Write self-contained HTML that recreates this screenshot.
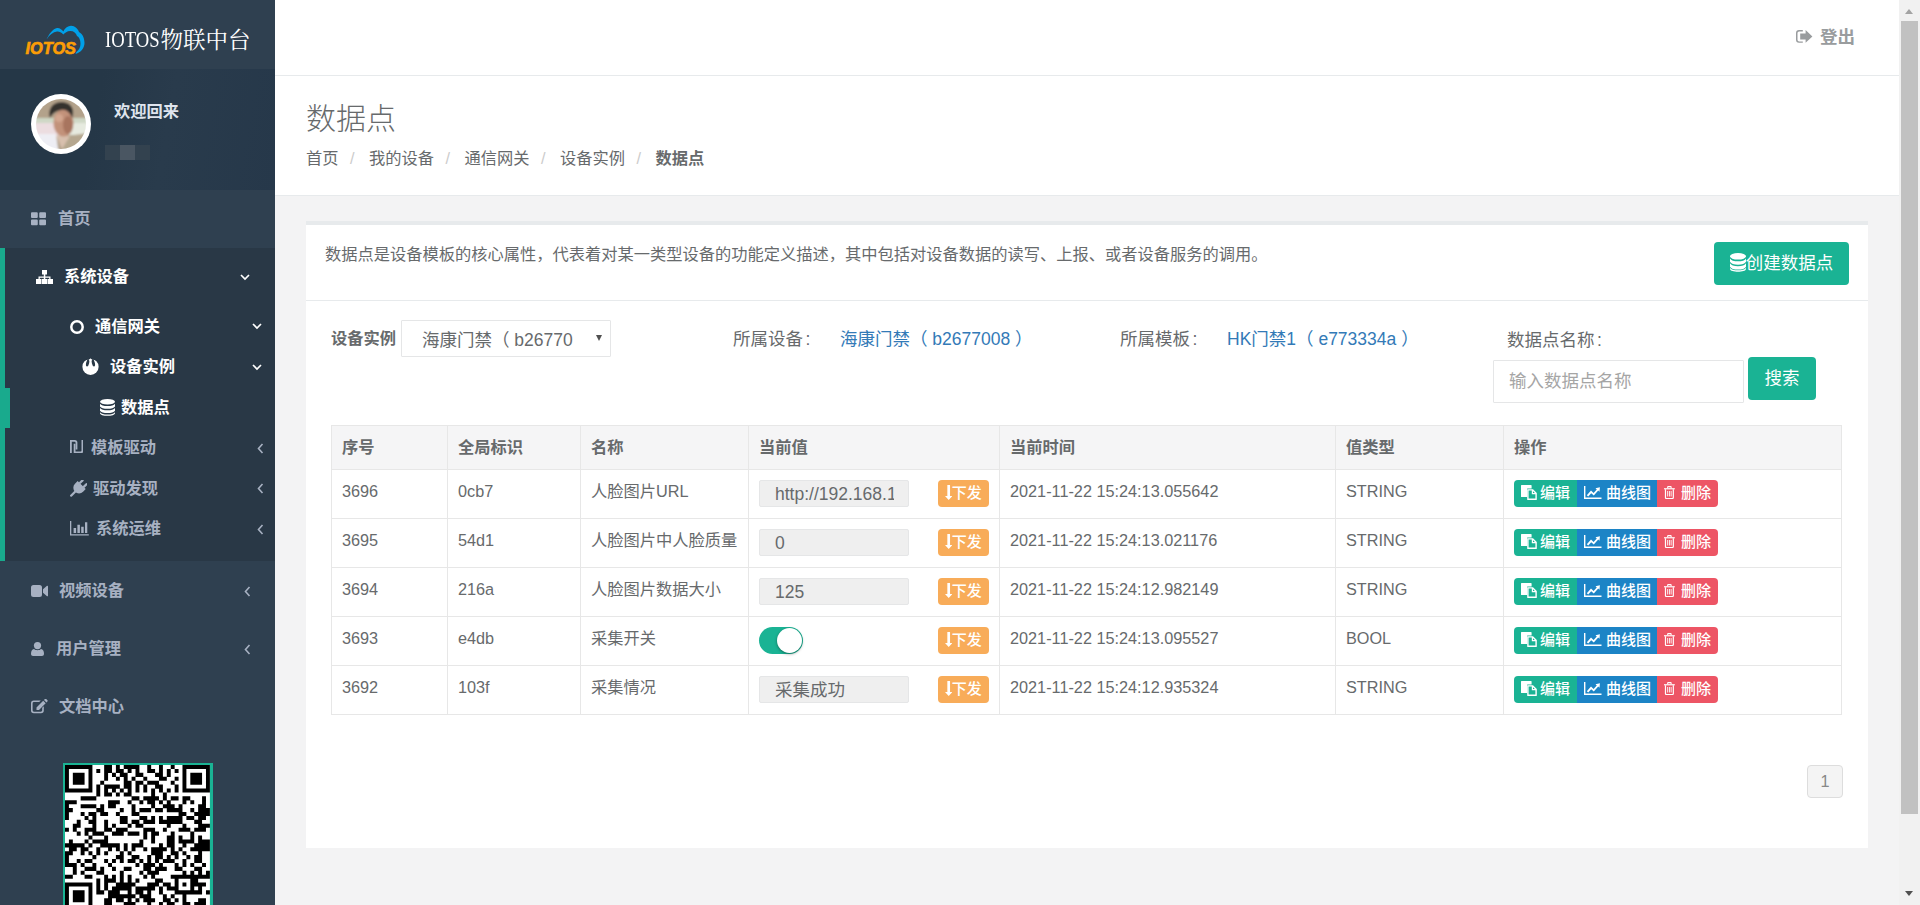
<!DOCTYPE html>
<html lang="zh-CN">
<head>
<meta charset="utf-8">
<title>IOTOS物联中台 - 数据点</title>
<style>
*{box-sizing:border-box}
html,body{margin:0;padding:0}
body{width:1920px;height:905px;overflow:hidden;position:relative;background:#f3f3f4;color:#676a6c;
 font-family:"Liberation Sans","Noto Sans CJK SC",sans-serif;font-size:16.25px;line-height:1.42857}
a{text-decoration:none;color:inherit}
ul{list-style:none;margin:0;padding:0}
svg{display:block}

/* ---------- sidebar ---------- */
#side{position:absolute;left:0;top:0;width:275px;height:905px;background:#2f4050;overflow:hidden}
.brand{position:absolute;left:0;top:0;width:275px;height:70px}
.brand .logo{position:absolute;left:24px;top:24px;width:62px;height:34px}
.brand .name .lat{display:inline-block;width:55.500px;transform:scaleX(.83);transform-origin:0 50%;letter-spacing:0;vertical-align:baseline;position:relative;top:-1px}
.brand .name{position:absolute;left:105px;top:24px;font-family:"Liberation Serif","Noto Serif CJK SC",serif;font-size:22.5px;line-height:34px;color:#fff;white-space:nowrap;letter-spacing:0}
.profile{position:absolute;left:0;top:69px;width:275px;height:121px;background:#263848 linear-gradient(100deg,#253747 0,#253747 35%,#293b4c 60%,#26384a 100%);overflow:hidden}
.avatar{position:absolute;left:31px;top:25px}
.profile .hello{position:absolute;left:114px;top:30px;font-size:16.25px;font-weight:700;color:#dfe4ed;line-height:24px}
.profile .uname{position:absolute;left:105px;top:76px;width:45px;height:15px;background:#33424f}
.profile .uname i{position:absolute;left:15px;top:0;width:15px;height:15px;background:#4a5662}

.nav a{display:block;position:relative;color:#a7b1c2;font-weight:700;white-space:nowrap}
.nav .ic{position:absolute}
.nav .arr{position:absolute}

.qrbox{position:absolute;left:63px;top:763px;width:150px;height:150px;background:#1ab394}
.qrbox svg{position:absolute;left:1.950px;top:1.950px}
/* ---------- nav ---------- */
.nav li{position:relative}
.nav .l1>a{height:58px;line-height:56px;padding-left:58px}
.nav .l1.active{background:#293846;border-left:5px solid #19aa8d;padding-bottom:11px;margin-bottom:1.5px}
.nav .l1.active>a{color:#fff;padding-left:59px;height:58.5px}
.nav .sub a{height:40.5px;line-height:38.5px}
.nav .sub a.on{color:#fff}
.nav .cur:before{content:"";position:absolute;left:-5px;top:0;width:10px;height:40.5px;background:#19aa8d}
.nav svg{position:absolute;top:50%;fill:currentColor}

/* ---------- main ---------- */
#main{position:absolute;left:275px;top:0;width:1624px;height:905px}
.topbar{position:absolute;left:0;top:0;width:1624px;height:76px;background:#fff;border-bottom:1px solid #e7eaec}
.logout{position:absolute;left:1521px;top:24px;height:26px;line-height:26px;font-size:17.5px;font-weight:700;color:#999c9e;padding-left:24px;white-space:nowrap}
.logout svg{position:absolute;left:0;top:6.200px;fill:#999c9e}
.heading{position:absolute;left:0;top:76px;width:1624px;height:120px;background:#fff;border-bottom:1px solid #e7eaec}
.heading h2{position:absolute;left:31px;top:22px;margin:0;font-size:30px;font-weight:300;line-height:42px;color:#676a6c;white-space:nowrap}
.crumb{position:absolute;left:31px;top:70px;height:24px;line-height:24px;white-space:nowrap;display:flex}
.crumb li+li:before{content:"/";color:#ccc;padding:0 14.5px 0 11.5px;font-weight:400}
.crumb li.act{font-weight:700}

.ibox{position:absolute;left:31px;top:221px;width:1562px;height:627px;background:#fff;border-top:4px solid #e7eaec}
.ibox-title{position:absolute;left:0;top:0;width:1562px;height:76px;border-bottom:1px solid #e7eaec}
.ibox-title p{position:absolute;left:19px;top:17px;margin:0;line-height:24px;font-size:16.25px;color:#676a6c;white-space:nowrap}
.btn{display:inline-block;color:#fff;border-radius:4px;white-space:nowrap;text-align:center}
.btn-create{position:absolute;left:1408px;top:17px;width:135px;height:43px;line-height:43px;background:#1ab394;font-size:17.5px;padding-left:16px}
.btn-create svg{position:absolute;left:16px;top:11.300px;fill:#fff}

.filters{position:absolute;left:0;top:76px;width:1562px;height:125px;font-size:17.5px}
.filters>*{position:absolute;white-space:nowrap}
.flabel{left:25px;top:25px;font-size:16.25px;font-weight:700;line-height:24px}
.fselect{left:95px;top:19px;width:210px;height:37px;border:1px solid #e5e6e7;border-radius:1px;background:#fff;line-height:38px;padding-left:20px;color:#676a6c;overflow:hidden}
.fselect:after{content:"";position:absolute;right:8.500px;top:14px;border:3.600px solid transparent;border-top:6.500px solid #505050;border-bottom:0}
.ftext s{text-decoration:none;margin-left:2.500px}
.ftext{top:25px;line-height:26px}
.flink{top:25px;line-height:26px;color:#337ab7}
.finput{left:1187px;top:59px;width:251px;height:43px;border:1px solid #e5e6e7;border-radius:1px;line-height:41px;padding-left:15px;color:#a5a5a5}
.btn-search{left:1442px;top:56px;width:68px;height:43px;line-height:42px;background:#1ab394;font-size:17.5px}

table.dt{position:absolute;left:25px;top:200px;width:1510px;border-collapse:collapse;table-layout:fixed;font-size:16.25px}
table.dt th,table.dt td{border:1px solid #e7e7e7;padding:0 10px;text-align:left;vertical-align:top;white-space:nowrap;overflow:hidden}
table.dt th{height:44px;line-height:42px;background:#f5f5f6;font-weight:700;color:#676a6c}
table.dt td{height:49px;line-height:22px;padding-top:10px}
.vin b{display:block;font-weight:400;overflow:hidden;width:119px}
.vin{display:inline-block;vertical-align:top;width:150px;height:27px;line-height:27px;background:#efefef;border:1px solid #e5e6e7;border-radius:2px;padding-left:15px;font-size:17.5px;color:#676a6c;overflow:hidden;margin-top:0}
.bsend{font-weight:500;display:inline-block;vertical-align:top;width:51px;height:27px;line-height:26px;background:#f8ac59;color:#fff;border-radius:4px;font-size:15px;margin-left:29px;position:relative;padding-left:13.8px;text-align:left}
.bsend svg{position:absolute;left:6.9px;top:4.6px;fill:#fff}
.sw{display:inline-block;vertical-align:top;width:44px;height:27px;border-radius:14px;background:#1ab394;position:relative;margin-top:0;margin-right:106px}
.sw i{position:absolute;right:.600px;top:.600px;width:25.800px;height:25.800px;border-radius:50%;background:#fff;box-shadow:0 1px 3px rgba(0,0,0,.4)}
.ops{font-weight:500;display:flex;height:27px;margin-top:0;font-size:15px;color:#fff;line-height:25px}
.ops span{position:relative;height:27px}
.ops svg{position:absolute;top:6px;fill:#fff}
.o1{width:63px;background:#1ab394;border-radius:4px 0 0 4px;padding-left:26px}
.o2{width:80px;background:#1c84c6;padding-left:29px}
.o3{width:61px;background:#ed5565;border-radius:0 4px 4px 0;padding-left:24px}
.pager{position:absolute;left:1501px;top:540px;width:36px;height:33px;line-height:31px;text-align:center;background:#f4f4f4;border:1px solid #ddd;border-radius:4px;color:#888;font-size:16.25px}

/* ---------- fake scrollbar ---------- */
#sb{position:absolute;left:1899px;top:0;width:21px;height:905px;background:#f1f1f1}
#sb .thumb{position:absolute;left:2px;top:21px;width:17px;height:793px;background:#c1c1c1}
#sb .up{position:absolute;left:6.4px;top:9px;border:4.5px solid transparent;border-bottom:5px solid #a3a3a3;border-top:0}
#sb .dn{position:absolute;left:6px;top:891px;border:4.5px solid transparent;border-top:5px solid #505050;border-bottom:0}
</style>
</head>
<body>

<nav id="side">
  <div class="brand">
    <svg class="logo" width="62" height="34" viewBox="0 0 62 34"><path fill="#00a0e9" d="M22.500 15.500C25 10 29 4.500 33 4C36 3.800 38 6 39.300 7.500C41 4 44 1.800 47 1.800C51 1.800 54 5 55 8C59 10 60.500 15 60.500 19C60.500 24 57 28.500 51.500 30L52.300 28C55 26 56.500 23 56.500 19.700C56.500 16 55 13 53 12C52 9 50 7 46.200 7C43 7 41 9 39.300 10.500C37 8 35 7.400 33 7.600C29 8 25.500 11 22.500 15.500Z"/><text x="1.500" y="30.200" font-family="'Liberation Sans',sans-serif" font-size="17.300" font-weight="700" font-style="italic" fill="#fb9d06" stroke="#fb9d06" stroke-width=".7" textLength="50.500" lengthAdjust="spacingAndGlyphs">IOTOS</text></svg>
    <div class="name"><span class="lat">IOTOS</span>物联中台</div>
  </div>
  <div class="profile">
    <svg class="avatar" width="60" height="60" viewBox="0 0 60 60"><defs><clipPath id="avc"><circle cx="30" cy="30" r="25"/></clipPath><filter id="avb" x="-10%" y="-10%" width="120%" height="120%"><feGaussianBlur stdDeviation="1.200"/></filter></defs><circle cx="30" cy="30" r="30" fill="#fff"/><g clip-path="url(#avc)"><g filter="url(#avb)"><rect x="-5" y="-5" width="70" height="70" fill="#b3a28b"/><rect x="-5" y="24" width="70" height="6" fill="#cfd8c6"/><rect x="-5" y="29" width="34" height="14" fill="#ecdde0"/><rect x="38" y="29" width="30" height="12" fill="#e6eadf"/><path d="M-5 40h30l4 28h-34z" fill="#eeeef4"/><path d="M36 42l29-4v30H28z" fill="#b5a78f"/><path d="M25 41l6 14 8-13z" fill="#d8c0ae"/><ellipse cx="32.500" cy="29" rx="10" ry="13.500" fill="#c2927a"/><ellipse cx="37" cy="31" rx="5" ry="9" fill="#a8755f"/><ellipse cx="28" cy="24" rx="4" ry="4" fill="#d3a68f"/><path d="M19 24c-3-10 4-17 13-16s12 8 9 16c-2-6-6-9-11-8s-8 3-11 8z" fill="#35302e"/></g></g></svg>
    <div class="hello">欢迎回来</div>
    <div class="uname"><i></i></div>
  </div>
  <ul class="nav" id="menu" style="position:absolute;left:0;top:190px;width:275px">
    <li class="l1"><a style="padding-left:58px"><svg width="15" height="13.5" viewBox="0 0 15.5 13.5" style="left:31px;margin-top:-6.75px"><path d="M0 1a1 1 0 0 1 1-1h5a1 1 0 0 1 1 1v4a1 1 0 0 1-1 1H1a1 1 0 0 1-1-1zM8.500 1a1 1 0 0 1 1-1h5a1 1 0 0 1 1 1v4a1 1 0 0 1-1 1h-5a1 1 0 0 1-1-1zM0 8.500a1 1 0 0 1 1-1h5a1 1 0 0 1 1 1v4a1 1 0 0 1-1 1H1a1 1 0 0 1-1-1zM8.500 8.500a1 1 0 0 1 1-1h5a1 1 0 0 1 1 1v4a1 1 0 0 1-1 1h-5a1 1 0 0 1-1-1z"/></svg>首页</a></li>
    <li class="l1 active"><a><svg width="17" height="14" viewBox="0 0 17 14" style="left:31px;margin-top:-7.0px"><path d="M6 0h5v4.500H9.300V6.500H14.500V9H17v5h-5.500V9h1.700V7.800H9.300V9H11v5H6V9h1.800V7.800H3.800V9H5.500v5H0V9h2.500V6.500H7.800V4.500H6z"/></svg>系统设备<svg width="10" height="7" viewBox="0 0 10 7" style="left:235px;margin-top:-3.5px"><path d="M1 1l4 4 4-4" fill="none" stroke="currentColor" stroke-width="1.700"/></svg></a>
      <ul class="sub">
        <li><a class="on" style="padding-left:90px"><svg width="14" height="14" viewBox="0 0 14 14" style="left:65px;margin-top:-7.0px"><circle cx="7" cy="7" r="5.700" fill="none" stroke="currentColor" stroke-width="2.500"/></svg>通信网关<svg width="10" height="7" viewBox="0 0 10 7" style="left:247px;margin-top:-3.5px"><path d="M1 1l4 4 4-4" fill="none" stroke="currentColor" stroke-width="1.700"/></svg></a></li>
        <li><a class="on" style="padding-left:105px"><svg width="17" height="17" viewBox="0 0 17 17" style="left:77px;margin-top:-9px"><defs><mask id="ram"><rect width="17" height="17" fill="#000"/><circle cx="8.500" cy="8.800" r="8.100" fill="#fff"/><path d="M0 0h17v3.200L8.500 1 0 3.200z" fill="#000"/><ellipse cx="5.700" cy="4.800" rx="1.500" ry="3.700" transform="rotate(14 5.700 4.800)" fill="#000"/><ellipse cx="11.300" cy="4.800" rx="1.500" ry="3.700" transform="rotate(-14 11.300 4.800)" fill="#000"/><path d="M8.500 .2l1.700 2.300H9.200v5.500H7.800V2.500H6.800z" fill="#fff"/></mask></defs><rect width="17" height="17" mask="url(#ram)"/></svg>设备实例<svg width="10" height="7" viewBox="0 0 10 7" style="left:247px;margin-top:-3.5px"><path d="M1 1l4 4 4-4" fill="none" stroke="currentColor" stroke-width="1.700"/></svg></a></li>
        <li class="cur"><a class="on" style="padding-left:116px"><svg width="15" height="17" viewBox="0 0 15 17" style="left:95px;margin-top:-8.5px"><ellipse cx="7.500" cy="2.800" rx="7.500" ry="2.800"/><path d="M0 4.800c1 1.700 3.800 2.300 7.500 2.300s6.500-.6 7.500-2.300v2.700c-1 1.700-3.800 2.300-7.500 2.300S1 9.200 0 7.500z"/><path d="M0 9c1 1.700 3.800 2.300 7.500 2.300S14 10.700 15 9v2.700c-1 1.700-3.800 2.300-7.500 2.300S1 13.400 0 11.700z"/><path d="M0 13.200c1 1.700 3.800 2.300 7.500 2.300s6.500-.6 7.500-2.300v1c0 1.600-3.600 2.600-7.500 2.600S0 15.800 0 14.200z"/></svg>数据点</a></li>
        <li><a style="padding-left:86px"><svg width="13.300" height="13.300" viewBox="0 0 13.300 13.300" style="left:65px;margin-top:-8.200px"><path d="M0 13.300V0H4.800A2.600 2.600 0 0 1 7.400 2.600V9.500H5.600V2.900A1.100 1.100 0 0 0 4.500 1.800H1.800V13.300Z"/><path d="M13.300 0V10.700A2.600 2.600 0 0 1 10.700 13.300H3.700V3.800H5.500V11.500H10.400A1.100 1.100 0 0 0 11.500 10.400V0Z"/></svg>模板驱动<svg width="7" height="11" viewBox="0 0 7 11" style="left:252px;margin-top:-5.5px"><path d="M5.500 1l-4 4.500 4 4.500" fill="none" stroke="currentColor" stroke-width="1.600"/></svg></a></li>
        <li><a style="padding-left:88px"><svg width="17" height="17" viewBox="0 0 17 17" style="left:65px;margin-top:-8.600px"><g transform="translate(8.600,8.200) rotate(45)"><rect x="-3.900" y="-9.400" width="2.300" height="5.600" rx="1.100"/><rect x="1.600" y="-9.400" width="2.300" height="5.600" rx="1.100"/><path d="M-5.700 -4.400H5.700V-.6A5.700 5.700 0 0 1 -5.700 -.6Z"/><rect x="-1.150" y="4" width="2.300" height="7.600" rx="1"/></g></svg>驱动发现<svg width="7" height="11" viewBox="0 0 7 11" style="left:252px;margin-top:-5.5px"><path d="M5.500 1l-4 4.500 4 4.500" fill="none" stroke="currentColor" stroke-width="1.600"/></svg></a></li>
        <li><a style="padding-left:91px"><svg width="18.800" height="14.600" viewBox="0 0 18.800 14.600" style="left:65px;margin-top:-8.300px"><path d="M0 0h1.300v13.300H18.800v1.300H0z"/><path d="M3.600 7h2.500v5H3.600zM7.400 3.800h2.500V12H7.400zM11.200 5.700h2.500V12h-2.500zM15 1.300h2.300V12H15z"/></svg>系统运维<svg width="7" height="11" viewBox="0 0 7 11" style="left:252px;margin-top:-5.5px"><path d="M5.500 1l-4 4.500 4 4.500" fill="none" stroke="currentColor" stroke-width="1.600"/></svg></a></li>
      </ul>
    </li>
    <li class="l1"><a style="padding-left:59px"><svg width="17" height="12" viewBox="0 0 17 12" style="left:31px;margin-top:-6.0px"><path d="M0 2.500A2.500 2.500 0 0 1 2.500 0h6A2.500 2.500 0 0 1 11 2.500v7A2.500 2.500 0 0 1 8.500 12h-6A2.500 2.500 0 0 1 0 9.500zM12 4.300L16 .8c.4-.3 1-.1 1 .4v9.600c0 .5-.6.700-1 .4L12 7.700z"/></svg>视频设备<svg width="7" height="11" viewBox="0 0 7 11" style="left:244px;margin-top:-5.5px"><path d="M5.500 1l-4 4.500 4 4.500" fill="none" stroke="currentColor" stroke-width="1.600"/></svg></a></li>
    <li class="l1"><a style="padding-left:56px"><svg width="13" height="14" viewBox="0 0 13 14" style="left:31px;margin-top:-7.0px"><circle cx="6.500" cy="3.600" r="3.600"/><path d="M3 7c-2 .4-3 2.200-3 4.800C0 13.200.9 14 2 14h9c1.100 0 2-.8 2-2.200 0-2.600-1-4.400-3-4.800-.9.800-2 1.200-3.500 1.200S3.900 7.800 3 7z"/></svg>用户管理<svg width="7" height="11" viewBox="0 0 7 11" style="left:244px;margin-top:-5.5px"><path d="M5.500 1l-4 4.500 4 4.500" fill="none" stroke="currentColor" stroke-width="1.600"/></svg></a></li>
    <li class="l1"><a style="padding-left:59px"><svg width="17" height="15.5" viewBox="0 0 17 15.5" style="left:31px;margin-top:-7.75px"><path d="M2.800 1.500h7l-1.600 1.600H3A1.400 1.400 0 0 0 1.600 4.500v6.800A1.400 1.400 0 0 0 3 12.700h6.800a1.400 1.400 0 0 0 1.400-1.400V8.800l1.600-1.600v4.300a2.800 2.800 0 0 1-2.800 2.800H2.800A2.800 2.800 0 0 1 0 11.500V4.300A2.800 2.800 0 0 1 2.800 1.500z"/><path d="M5.500 7.200L12.200.5l2.500 2.500L8 9.700H5.500zM13 -.3l.9-.9a.9.900 0 0 1 1.300 0l1.200 1.200a.9.900 0 0 1 0 1.300l-.9.900z" transform="translate(0,1.200)"/></svg>文档中心</a></li>
  </ul>
  <div class="qrbox"><svg class="qr" width="144.900" height="144.900" viewBox="0 0 37 37"><rect width="37" height="37" fill="#fff"/><path d="M0 0h7v1.04h-7zM10 0h2v1.04h-2zM13 0h1v1.04h-1zM15 0h4v1.04h-4zM21 0h1v1.04h-1zM24 0h1v1.04h-1zM27 0h1v1.04h-1zM30 0h7v1.04h-7zM0 1h1v1.04h-1zM6 1h1v1.04h-1zM8 1h1v1.04h-1zM10 1h2v1.04h-2zM13 1h2v1.04h-2zM16 1h1v1.04h-1zM18 1h1v1.04h-1zM21 1h2v1.04h-2zM24 1h1v1.04h-1zM26 1h1v1.04h-1zM28 1h1v1.04h-1zM30 1h1v1.04h-1zM36 1h1v1.04h-1zM0 2h1v1.04h-1zM2 2h3v1.04h-3zM6 2h1v1.04h-1zM10 2h1v1.04h-1zM12 2h1v1.04h-1zM14 2h2v1.04h-2zM18 2h2v1.04h-2zM23 2h2v1.04h-2zM26 2h1v1.04h-1zM30 2h1v1.04h-1zM32 2h3v1.04h-3zM36 2h1v1.04h-1zM0 3h1v1.04h-1zM2 3h3v1.04h-3zM6 3h1v1.04h-1zM10 3h1v1.04h-1zM13 3h1v1.04h-1zM15 3h1v1.04h-1zM17 3h1v1.04h-1zM20 3h1v1.04h-1zM24 3h2v1.04h-2zM28 3h1v1.04h-1zM30 3h1v1.04h-1zM32 3h3v1.04h-3zM36 3h1v1.04h-1zM0 4h1v1.04h-1zM2 4h3v1.04h-3zM6 4h1v1.04h-1zM9 4h1v1.04h-1zM15 4h2v1.04h-2zM18 4h2v1.04h-2zM21 4h3v1.04h-3zM27 4h1v1.04h-1zM30 4h1v1.04h-1zM32 4h3v1.04h-3zM36 4h1v1.04h-1zM0 5h1v1.04h-1zM6 5h1v1.04h-1zM8 5h1v1.04h-1zM10 5h4v1.04h-4zM15 5h2v1.04h-2zM18 5h1v1.04h-1zM20 5h1v1.04h-1zM23 5h2v1.04h-2zM28 5h1v1.04h-1zM30 5h1v1.04h-1zM36 5h1v1.04h-1zM0 6h7v1.04h-7zM8 6h1v1.04h-1zM10 6h1v1.04h-1zM12 6h1v1.04h-1zM14 6h1v1.04h-1zM16 6h1v1.04h-1zM18 6h1v1.04h-1zM20 6h1v1.04h-1zM22 6h1v1.04h-1zM24 6h1v1.04h-1zM26 6h1v1.04h-1zM28 6h1v1.04h-1zM30 6h7v1.04h-7zM8 7h1v1.04h-1zM10 7h2v1.04h-2zM13 7h1v1.04h-1zM15 7h2v1.04h-2zM22 7h1v1.04h-1zM25 7h1v1.04h-1zM4 8h4v1.04h-4zM17 8h2v1.04h-2zM20 8h4v1.04h-4zM25 8h1v1.04h-1zM27 8h2v1.04h-2zM30 8h2v1.04h-2zM35 8h1v1.04h-1zM0 9h3v1.04h-3zM11 9h3v1.04h-3zM16 9h1v1.04h-1zM19 9h1v1.04h-1zM21 9h2v1.04h-2zM24 9h1v1.04h-1zM26 9h1v1.04h-1zM30 9h1v1.04h-1zM32 9h1v1.04h-1zM35 9h1v1.04h-1zM0 10h1v1.04h-1zM4 10h4v1.04h-4zM9 10h1v1.04h-1zM11 10h2v1.04h-2zM17 10h1v1.04h-1zM22 10h1v1.04h-1zM25 10h3v1.04h-3zM29 10h1v1.04h-1zM34 10h2v1.04h-2zM0 11h2v1.04h-2zM8 11h2v1.04h-2zM14 11h1v1.04h-1zM17 11h1v1.04h-1zM19 11h3v1.04h-3zM23 11h2v1.04h-2zM26 11h4v1.04h-4zM32 11h1v1.04h-1zM34 11h3v1.04h-3zM0 12h1v1.04h-1zM4 12h1v1.04h-1zM6 12h2v1.04h-2zM9 12h2v1.04h-2zM13 12h1v1.04h-1zM17 12h2v1.04h-2zM29 12h2v1.04h-2zM33 12h4v1.04h-4zM0 13h1v1.04h-1zM5 13h1v1.04h-1zM7 13h1v1.04h-1zM14 13h2v1.04h-2zM19 13h2v1.04h-2zM22 13h1v1.04h-1zM24 13h1v1.04h-1zM26 13h4v1.04h-4zM31 13h2v1.04h-2zM34 13h2v1.04h-2zM3 14h1v1.04h-1zM6 14h2v1.04h-2zM10 14h1v1.04h-1zM14 14h2v1.04h-2zM17 14h2v1.04h-2zM20 14h3v1.04h-3zM24 14h6v1.04h-6zM33 14h2v1.04h-2zM2 15h2v1.04h-2zM7 15h1v1.04h-1zM10 15h1v1.04h-1zM12 15h1v1.04h-1zM16 15h1v1.04h-1zM18 15h2v1.04h-2zM26 15h1v1.04h-1zM30 15h1v1.04h-1zM34 15h3v1.04h-3zM0 16h1v1.04h-1zM2 16h1v1.04h-1zM5 16h3v1.04h-3zM10 16h2v1.04h-2zM13 16h3v1.04h-3zM20 16h3v1.04h-3zM25 16h1v1.04h-1zM29 16h3v1.04h-3zM33 16h3v1.04h-3zM3 17h1v1.04h-1zM5 17h1v1.04h-1zM7 17h3v1.04h-3zM12 17h3v1.04h-3zM16 17h3v1.04h-3zM20 17h1v1.04h-1zM22 17h2v1.04h-2zM27 17h1v1.04h-1zM32 17h1v1.04h-1zM6 18h1v1.04h-1zM10 18h1v1.04h-1zM20 18h1v1.04h-1zM22 18h1v1.04h-1zM26 18h2v1.04h-2zM29 18h1v1.04h-1zM32 18h1v1.04h-1zM34 18h1v1.04h-1zM1 19h1v1.04h-1zM5 19h1v1.04h-1zM7 19h4v1.04h-4zM19 19h1v1.04h-1zM22 19h1v1.04h-1zM26 19h2v1.04h-2zM29 19h4v1.04h-4zM34 19h3v1.04h-3zM0 20h5v1.04h-5zM6 20h1v1.04h-1zM9 20h5v1.04h-5zM15 20h1v1.04h-1zM17 20h3v1.04h-3zM24 20h1v1.04h-1zM26 20h2v1.04h-2zM30 20h1v1.04h-1zM33 20h4v1.04h-4zM1 21h2v1.04h-2zM4 21h2v1.04h-2zM8 21h1v1.04h-1zM11 21h1v1.04h-1zM13 21h1v1.04h-1zM15 21h1v1.04h-1zM17 21h1v1.04h-1zM20 21h1v1.04h-1zM22 21h4v1.04h-4zM27 21h1v1.04h-1zM29 21h1v1.04h-1zM32 21h5v1.04h-5zM0 22h2v1.04h-2zM4 22h1v1.04h-1zM6 22h1v1.04h-1zM8 22h1v1.04h-1zM10 22h1v1.04h-1zM14 22h1v1.04h-1zM16 22h1v1.04h-1zM22 22h3v1.04h-3zM27 22h2v1.04h-2zM30 22h1v1.04h-1zM34 22h1v1.04h-1zM0 23h1v1.04h-1zM7 23h1v1.04h-1zM13 23h2v1.04h-2zM17 23h2v1.04h-2zM21 23h1v1.04h-1zM23 23h2v1.04h-2zM26 23h1v1.04h-1zM28 23h1v1.04h-1zM31 23h1v1.04h-1zM33 23h2v1.04h-2zM0 24h1v1.04h-1zM3 24h1v1.04h-1zM5 24h2v1.04h-2zM10 24h1v1.04h-1zM12 24h1v1.04h-1zM14 24h1v1.04h-1zM16 24h2v1.04h-2zM19 24h1v1.04h-1zM21 24h1v1.04h-1zM23 24h1v1.04h-1zM25 24h3v1.04h-3zM30 24h1v1.04h-1zM33 24h2v1.04h-2zM0 25h3v1.04h-3zM4 25h1v1.04h-1zM7 25h1v1.04h-1zM11 25h1v1.04h-1zM18 25h1v1.04h-1zM20 25h3v1.04h-3zM24 25h1v1.04h-1zM28 25h1v1.04h-1zM30 25h1v1.04h-1zM32 25h1v1.04h-1zM35 25h1v1.04h-1zM2 26h1v1.04h-1zM5 26h3v1.04h-3zM9 26h1v1.04h-1zM12 26h1v1.04h-1zM15 26h2v1.04h-2zM20 26h2v1.04h-2zM23 26h3v1.04h-3zM28 26h2v1.04h-2zM33 26h2v1.04h-2zM2 27h1v1.04h-1zM4 27h1v1.04h-1zM8 27h2v1.04h-2zM14 27h1v1.04h-1zM19 27h1v1.04h-1zM21 27h3v1.04h-3zM30 27h1v1.04h-1zM32 27h1v1.04h-1zM34 27h1v1.04h-1zM36 27h1v1.04h-1zM0 28h2v1.04h-2zM5 28h2v1.04h-2zM10 28h1v1.04h-1zM12 28h1v1.04h-1zM14 28h1v1.04h-1zM16 28h1v1.04h-1zM20 28h1v1.04h-1zM22 28h1v1.04h-1zM27 28h10v1.04h-10zM8 29h1v1.04h-1zM10 29h3v1.04h-3zM14 29h1v1.04h-1zM16 29h1v1.04h-1zM18 29h1v1.04h-1zM23 29h2v1.04h-2zM28 29h1v1.04h-1zM32 29h2v1.04h-2zM0 30h7v1.04h-7zM8 30h1v1.04h-1zM10 30h1v1.04h-1zM13 30h5v1.04h-5zM21 30h3v1.04h-3zM25 30h2v1.04h-2zM28 30h1v1.04h-1zM30 30h1v1.04h-1zM32 30h4v1.04h-4zM0 31h1v1.04h-1zM6 31h1v1.04h-1zM8 31h1v1.04h-1zM10 31h1v1.04h-1zM12 31h5v1.04h-5zM18 31h5v1.04h-5zM24 31h1v1.04h-1zM26 31h3v1.04h-3zM32 31h1v1.04h-1zM34 31h1v1.04h-1zM0 32h1v1.04h-1zM2 32h3v1.04h-3zM6 32h1v1.04h-1zM8 32h2v1.04h-2zM11 32h3v1.04h-3zM16 32h1v1.04h-1zM18 32h2v1.04h-2zM21 32h1v1.04h-1zM24 32h1v1.04h-1zM28 32h7v1.04h-7zM36 32h1v1.04h-1zM0 33h1v1.04h-1zM2 33h3v1.04h-3zM6 33h1v1.04h-1zM11 33h7v1.04h-7zM19 33h3v1.04h-3zM25 33h1v1.04h-1zM27 33h1v1.04h-1zM30 33h1v1.04h-1zM0 34h1v1.04h-1zM2 34h3v1.04h-3zM6 34h1v1.04h-1zM10 34h2v1.04h-2zM13 34h2v1.04h-2zM16 34h1v1.04h-1zM18 34h1v1.04h-1zM20 34h3v1.04h-3zM25 34h2v1.04h-2zM28 34h1v1.04h-1zM30 34h1v1.04h-1zM34 34h2v1.04h-2zM0 35h1v1.04h-1zM6 35h1v1.04h-1zM10 35h2v1.04h-2zM15 35h3v1.04h-3zM21 35h1v1.04h-1zM24 35h1v1.04h-1zM26 35h2v1.04h-2zM30 35h2v1.04h-2zM33 35h3v1.04h-3zM0 36h7v1.04h-7zM8 36h1v1.04h-1zM11 36h1v1.04h-1zM13 36h1v1.04h-1zM16 36h3v1.04h-3zM22 36h1v1.04h-1zM25 36h1v1.04h-1zM28 36h2v1.04h-2zM31 36h1v1.04h-1zM34 36h1v1.04h-1z" fill="#000"/></svg></div>
</nav>

<div id="main">
  <div class="topbar">
    <a class="logout"><svg width="17" height="13" viewBox="0 0 17 13"><path d="M6.800 0H3A3 3 0 0 0 0 3V9.800A3 3 0 0 0 3 12.800H6.800V11.400H3.200A1.700 1.700 0 0 1 1.500 9.700V3.100A1.700 1.700 0 0 1 3.200 1.400H6.800Z"/><path d="M4.200 3.400H9.600V0L16.400 6.400 9.600 12.800V9.400H4.200Z"/></svg>登出</a>
  </div>
  <div class="heading">
    <h2>数据点</h2>
    <ul class="crumb"><li><a>首页</a></li><li><a>我的设备</a></li><li><a>通信网关</a></li><li><a>设备实例</a></li><li class="act">数据点</li></ul>
  </div>
  <div class="ibox">
    <div class="ibox-title">
      <p>数据点是设备模板的核心属性，代表着对某一类型设备的功能定义描述，其中包括对设备数据的读写、上报、或者设备服务的调用。</p>
      <a class="btn btn-create"><svg width="16" height="18.700" viewBox="0 0 16 17" preserveAspectRatio="none"><ellipse cx="8" cy="3" rx="8" ry="3"/><path d="M0 5c1 2 4 2.6 8 2.6S15 7 16 5v3c-1 2-4 2.6-8 2.6S1 10 0 8z"/><path d="M0 9.400000000000002c1 2 4 2.6 8 2.6s7-.6 8-2.6v3c-1 2-4 2.6-8 2.6s-7-.6-8-2.6z"/><path d="M0 13.5c1 2 4 2.3 8 2.3s7-.3 8-2.3v1c0 1.600-4 2.500-8 2.500s-8-.9-8-2.500z"/></svg>创建数据点</a>
    </div>
    <div class="filters">
      <label class="flabel">设备实例</label>
      <div class="fselect">海康门禁（ b26770</div>
      <span class="ftext" style="left:427px">所属设备<s>:</s></span>
      <a class="flink" style="left:534px">海康门禁（ b2677008 ）</a>
      <span class="ftext" style="left:814px">所属模板<s>:</s></span>
      <a class="flink" style="left:921px">HK门禁1（ e773334a ）</a>
      <span class="ftext" style="left:1201px;top:26px">数据点名称<s>:</s></span>
      <div class="finput">输入数据点名称</div>
      <a class="btn btn-search">搜索</a>
    </div>
    <table class="dt">
      <colgroup><col style="width:116px"><col style="width:133px"><col style="width:168px"><col style="width:251px"><col style="width:336px"><col style="width:168px"><col style="width:338px"></colgroup>
      <thead><tr><th>序号</th><th>全局标识</th><th>名称</th><th>当前值</th><th>当前时间</th><th>值类型</th><th>操作</th></tr></thead>
      <tbody>
<tr><td>3696</td><td>0cb7</td><td>人脸图片URL</td><td><span class="vin"><b>http://192.168.1</b></span><a class="bsend"><svg width="7.400" height="15" viewBox="0 0 7.400 15"><path d="M2.350 0h2.700v11h2.350L3.700 15 0 11h2.350z"/></svg>下发</a></td><td>2021-11-22 15:24:13.055642</td><td>STRING</td><td><div class="ops"><span class="o1"><svg style="left:6.700px;top:5.200px" width="16" height="15" viewBox="0 0 16 15"><path d="M.6 0h9.400a.6.600 0 0 1 .6.600V3.600H6.200V12H.6a.6.600 0 0 1-.6-.6V.6A.6.600 0 0 1 .6 0z"/><path fill-rule="evenodd" d="M6.800 4.200h5.200l3.800 3.800v6.400a.6.600 0 0 1-.6.600H6.800a.6.600 0 0 1-.6-.6V4.800a.6.600 0 0 1 .6-.6zM7.600 5.600v8h6.800V9.200h-3.600V5.600zM12 6.200v1.800h1.800z"/></svg>编辑</span><span class="o2"><svg style="left:7.300px;top:5.600px" width="17.500" height="13" viewBox="0 0 17.500 13"><path d="M0 0h1.400v11.600h16.100V13H0z"/><path d="M2.800 9.200l4.200-4.600 2.600 2.400 3.200-3.600-1.300-1.200 4.400-.9-.4 4.500-1.300-1.200-4.400 5-2.600-2.400-3 3.400z"/></svg>曲线图</span><span class="o3"><svg style="left:7.300px;top:5.500px" width="10.800" height="13.200" viewBox="0 0 11 13.200"><path d="M0 2.100h11v1.200H0z"/><path d="M3.200 2.100V1a1 1 0 0 1 1-1h2.600a1 1 0 0 1 1 1v1.100H6.700V1.100H4.300v1z"/><path fill-rule="evenodd" d="M.9 3.300h9.200v8.500a1.400 1.400 0 0 1-1.400 1.400H2.300A1.400 1.400 0 0 1 .9 11.800zM2.100 3.300v8.300a.4.400 0 0 0 .4.400h6a.4.400 0 0 0 .4-.4V3.300z"/><path d="M3.300 5h.9v5.600h-.9zM5.050 5h.9v5.600h-.9zM6.800 5h.9v5.600h-.9z"/></svg>删除</span></div></td></tr>
<tr><td>3695</td><td>54d1</td><td>人脸图片中人脸质量</td><td><span class="vin">0</span><a class="bsend"><svg width="7.400" height="15" viewBox="0 0 7.400 15"><path d="M2.350 0h2.700v11h2.350L3.700 15 0 11h2.350z"/></svg>下发</a></td><td>2021-11-22 15:24:13.021176</td><td>STRING</td><td><div class="ops"><span class="o1"><svg style="left:6.700px;top:5.200px" width="16" height="15" viewBox="0 0 16 15"><path d="M.6 0h9.400a.6.600 0 0 1 .6.600V3.600H6.200V12H.6a.6.600 0 0 1-.6-.6V.6A.6.600 0 0 1 .6 0z"/><path fill-rule="evenodd" d="M6.800 4.200h5.200l3.800 3.800v6.400a.6.600 0 0 1-.6.600H6.800a.6.600 0 0 1-.6-.6V4.800a.6.600 0 0 1 .6-.6zM7.600 5.600v8h6.800V9.200h-3.600V5.600zM12 6.200v1.800h1.800z"/></svg>编辑</span><span class="o2"><svg style="left:7.300px;top:5.600px" width="17.500" height="13" viewBox="0 0 17.500 13"><path d="M0 0h1.400v11.600h16.100V13H0z"/><path d="M2.800 9.200l4.200-4.600 2.600 2.400 3.200-3.600-1.300-1.200 4.400-.9-.4 4.500-1.300-1.200-4.400 5-2.600-2.400-3 3.400z"/></svg>曲线图</span><span class="o3"><svg style="left:7.300px;top:5.500px" width="10.800" height="13.200" viewBox="0 0 11 13.200"><path d="M0 2.100h11v1.200H0z"/><path d="M3.200 2.100V1a1 1 0 0 1 1-1h2.600a1 1 0 0 1 1 1v1.100H6.700V1.100H4.300v1z"/><path fill-rule="evenodd" d="M.9 3.300h9.200v8.500a1.400 1.400 0 0 1-1.400 1.400H2.300A1.400 1.400 0 0 1 .9 11.800zM2.100 3.300v8.300a.4.400 0 0 0 .4.400h6a.4.400 0 0 0 .4-.4V3.300z"/><path d="M3.300 5h.9v5.600h-.9zM5.050 5h.9v5.600h-.9zM6.800 5h.9v5.600h-.9z"/></svg>删除</span></div></td></tr>
<tr><td>3694</td><td>216a</td><td>人脸图片数据大小</td><td><span class="vin">125</span><a class="bsend"><svg width="7.400" height="15" viewBox="0 0 7.400 15"><path d="M2.350 0h2.700v11h2.350L3.700 15 0 11h2.350z"/></svg>下发</a></td><td>2021-11-22 15:24:12.982149</td><td>STRING</td><td><div class="ops"><span class="o1"><svg style="left:6.700px;top:5.200px" width="16" height="15" viewBox="0 0 16 15"><path d="M.6 0h9.400a.6.600 0 0 1 .6.600V3.600H6.200V12H.6a.6.600 0 0 1-.6-.6V.6A.6.600 0 0 1 .6 0z"/><path fill-rule="evenodd" d="M6.800 4.200h5.200l3.800 3.800v6.400a.6.600 0 0 1-.6.600H6.800a.6.600 0 0 1-.6-.6V4.800a.6.600 0 0 1 .6-.6zM7.600 5.600v8h6.800V9.200h-3.600V5.600zM12 6.200v1.800h1.800z"/></svg>编辑</span><span class="o2"><svg style="left:7.300px;top:5.600px" width="17.500" height="13" viewBox="0 0 17.500 13"><path d="M0 0h1.400v11.600h16.100V13H0z"/><path d="M2.800 9.200l4.200-4.600 2.600 2.400 3.200-3.600-1.300-1.200 4.400-.9-.4 4.500-1.300-1.200-4.400 5-2.600-2.400-3 3.400z"/></svg>曲线图</span><span class="o3"><svg style="left:7.300px;top:5.500px" width="10.800" height="13.200" viewBox="0 0 11 13.200"><path d="M0 2.100h11v1.200H0z"/><path d="M3.200 2.100V1a1 1 0 0 1 1-1h2.600a1 1 0 0 1 1 1v1.100H6.700V1.100H4.300v1z"/><path fill-rule="evenodd" d="M.9 3.300h9.200v8.500a1.400 1.400 0 0 1-1.400 1.400H2.300A1.400 1.400 0 0 1 .9 11.800zM2.100 3.300v8.300a.4.400 0 0 0 .4.400h6a.4.400 0 0 0 .4-.4V3.300z"/><path d="M3.300 5h.9v5.600h-.9zM5.050 5h.9v5.600h-.9zM6.800 5h.9v5.600h-.9z"/></svg>删除</span></div></td></tr>
<tr><td>3693</td><td>e4db</td><td>采集开关</td><td><span class="sw"><i></i></span><a class="bsend" style="margin-left:29px"><svg width="7.400" height="15" viewBox="0 0 7.400 15"><path d="M2.350 0h2.700v11h2.350L3.700 15 0 11h2.350z"/></svg>下发</a></td><td>2021-11-22 15:24:13.095527</td><td>BOOL</td><td><div class="ops"><span class="o1"><svg style="left:6.700px;top:5.200px" width="16" height="15" viewBox="0 0 16 15"><path d="M.6 0h9.400a.6.600 0 0 1 .6.600V3.600H6.200V12H.6a.6.600 0 0 1-.6-.6V.6A.6.600 0 0 1 .6 0z"/><path fill-rule="evenodd" d="M6.800 4.200h5.200l3.800 3.800v6.400a.6.600 0 0 1-.6.600H6.800a.6.600 0 0 1-.6-.6V4.800a.6.600 0 0 1 .6-.6zM7.600 5.600v8h6.800V9.200h-3.600V5.600zM12 6.200v1.800h1.800z"/></svg>编辑</span><span class="o2"><svg style="left:7.300px;top:5.600px" width="17.500" height="13" viewBox="0 0 17.500 13"><path d="M0 0h1.400v11.600h16.100V13H0z"/><path d="M2.800 9.200l4.200-4.600 2.600 2.400 3.200-3.600-1.300-1.200 4.400-.9-.4 4.500-1.300-1.200-4.400 5-2.600-2.400-3 3.400z"/></svg>曲线图</span><span class="o3"><svg style="left:7.300px;top:5.500px" width="10.800" height="13.200" viewBox="0 0 11 13.200"><path d="M0 2.100h11v1.200H0z"/><path d="M3.200 2.100V1a1 1 0 0 1 1-1h2.600a1 1 0 0 1 1 1v1.100H6.700V1.100H4.300v1z"/><path fill-rule="evenodd" d="M.9 3.300h9.200v8.500a1.400 1.400 0 0 1-1.400 1.400H2.300A1.400 1.400 0 0 1 .9 11.800zM2.100 3.300v8.300a.4.400 0 0 0 .4.400h6a.4.400 0 0 0 .4-.4V3.300z"/><path d="M3.300 5h.9v5.600h-.9zM5.050 5h.9v5.600h-.9zM6.800 5h.9v5.600h-.9z"/></svg>删除</span></div></td></tr>
<tr><td>3692</td><td>103f</td><td>采集情况</td><td><span class="vin">采集成功</span><a class="bsend"><svg width="7.400" height="15" viewBox="0 0 7.400 15"><path d="M2.350 0h2.700v11h2.350L3.700 15 0 11h2.350z"/></svg>下发</a></td><td>2021-11-22 15:24:12.935324</td><td>STRING</td><td><div class="ops"><span class="o1"><svg style="left:6.700px;top:5.200px" width="16" height="15" viewBox="0 0 16 15"><path d="M.6 0h9.400a.6.600 0 0 1 .6.600V3.600H6.200V12H.6a.6.600 0 0 1-.6-.6V.6A.6.600 0 0 1 .6 0z"/><path fill-rule="evenodd" d="M6.800 4.200h5.200l3.800 3.800v6.400a.6.600 0 0 1-.6.600H6.800a.6.600 0 0 1-.6-.6V4.800a.6.600 0 0 1 .6-.6zM7.600 5.600v8h6.800V9.200h-3.600V5.600zM12 6.200v1.800h1.800z"/></svg>编辑</span><span class="o2"><svg style="left:7.300px;top:5.600px" width="17.500" height="13" viewBox="0 0 17.500 13"><path d="M0 0h1.400v11.600h16.100V13H0z"/><path d="M2.800 9.200l4.200-4.600 2.600 2.400 3.200-3.600-1.300-1.200 4.400-.9-.4 4.500-1.300-1.200-4.400 5-2.600-2.400-3 3.400z"/></svg>曲线图</span><span class="o3"><svg style="left:7.300px;top:5.500px" width="10.800" height="13.200" viewBox="0 0 11 13.200"><path d="M0 2.100h11v1.200H0z"/><path d="M3.200 2.100V1a1 1 0 0 1 1-1h2.600a1 1 0 0 1 1 1v1.100H6.700V1.100H4.300v1z"/><path fill-rule="evenodd" d="M.9 3.300h9.200v8.500a1.400 1.400 0 0 1-1.400 1.400H2.300A1.400 1.400 0 0 1 .9 11.800zM2.100 3.300v8.300a.4.400 0 0 0 .4.400h6a.4.400 0 0 0 .4-.4V3.300z"/><path d="M3.300 5h.9v5.600h-.9zM5.050 5h.9v5.600h-.9zM6.800 5h.9v5.600h-.9z"/></svg>删除</span></div></td></tr>
      </tbody>
    </table>
    <div class="pager">1</div>
  </div>
</div>
<div id="sb"><i class="up"></i><div class="thumb"></div><i class="dn"></i></div>

</body>
</html>
